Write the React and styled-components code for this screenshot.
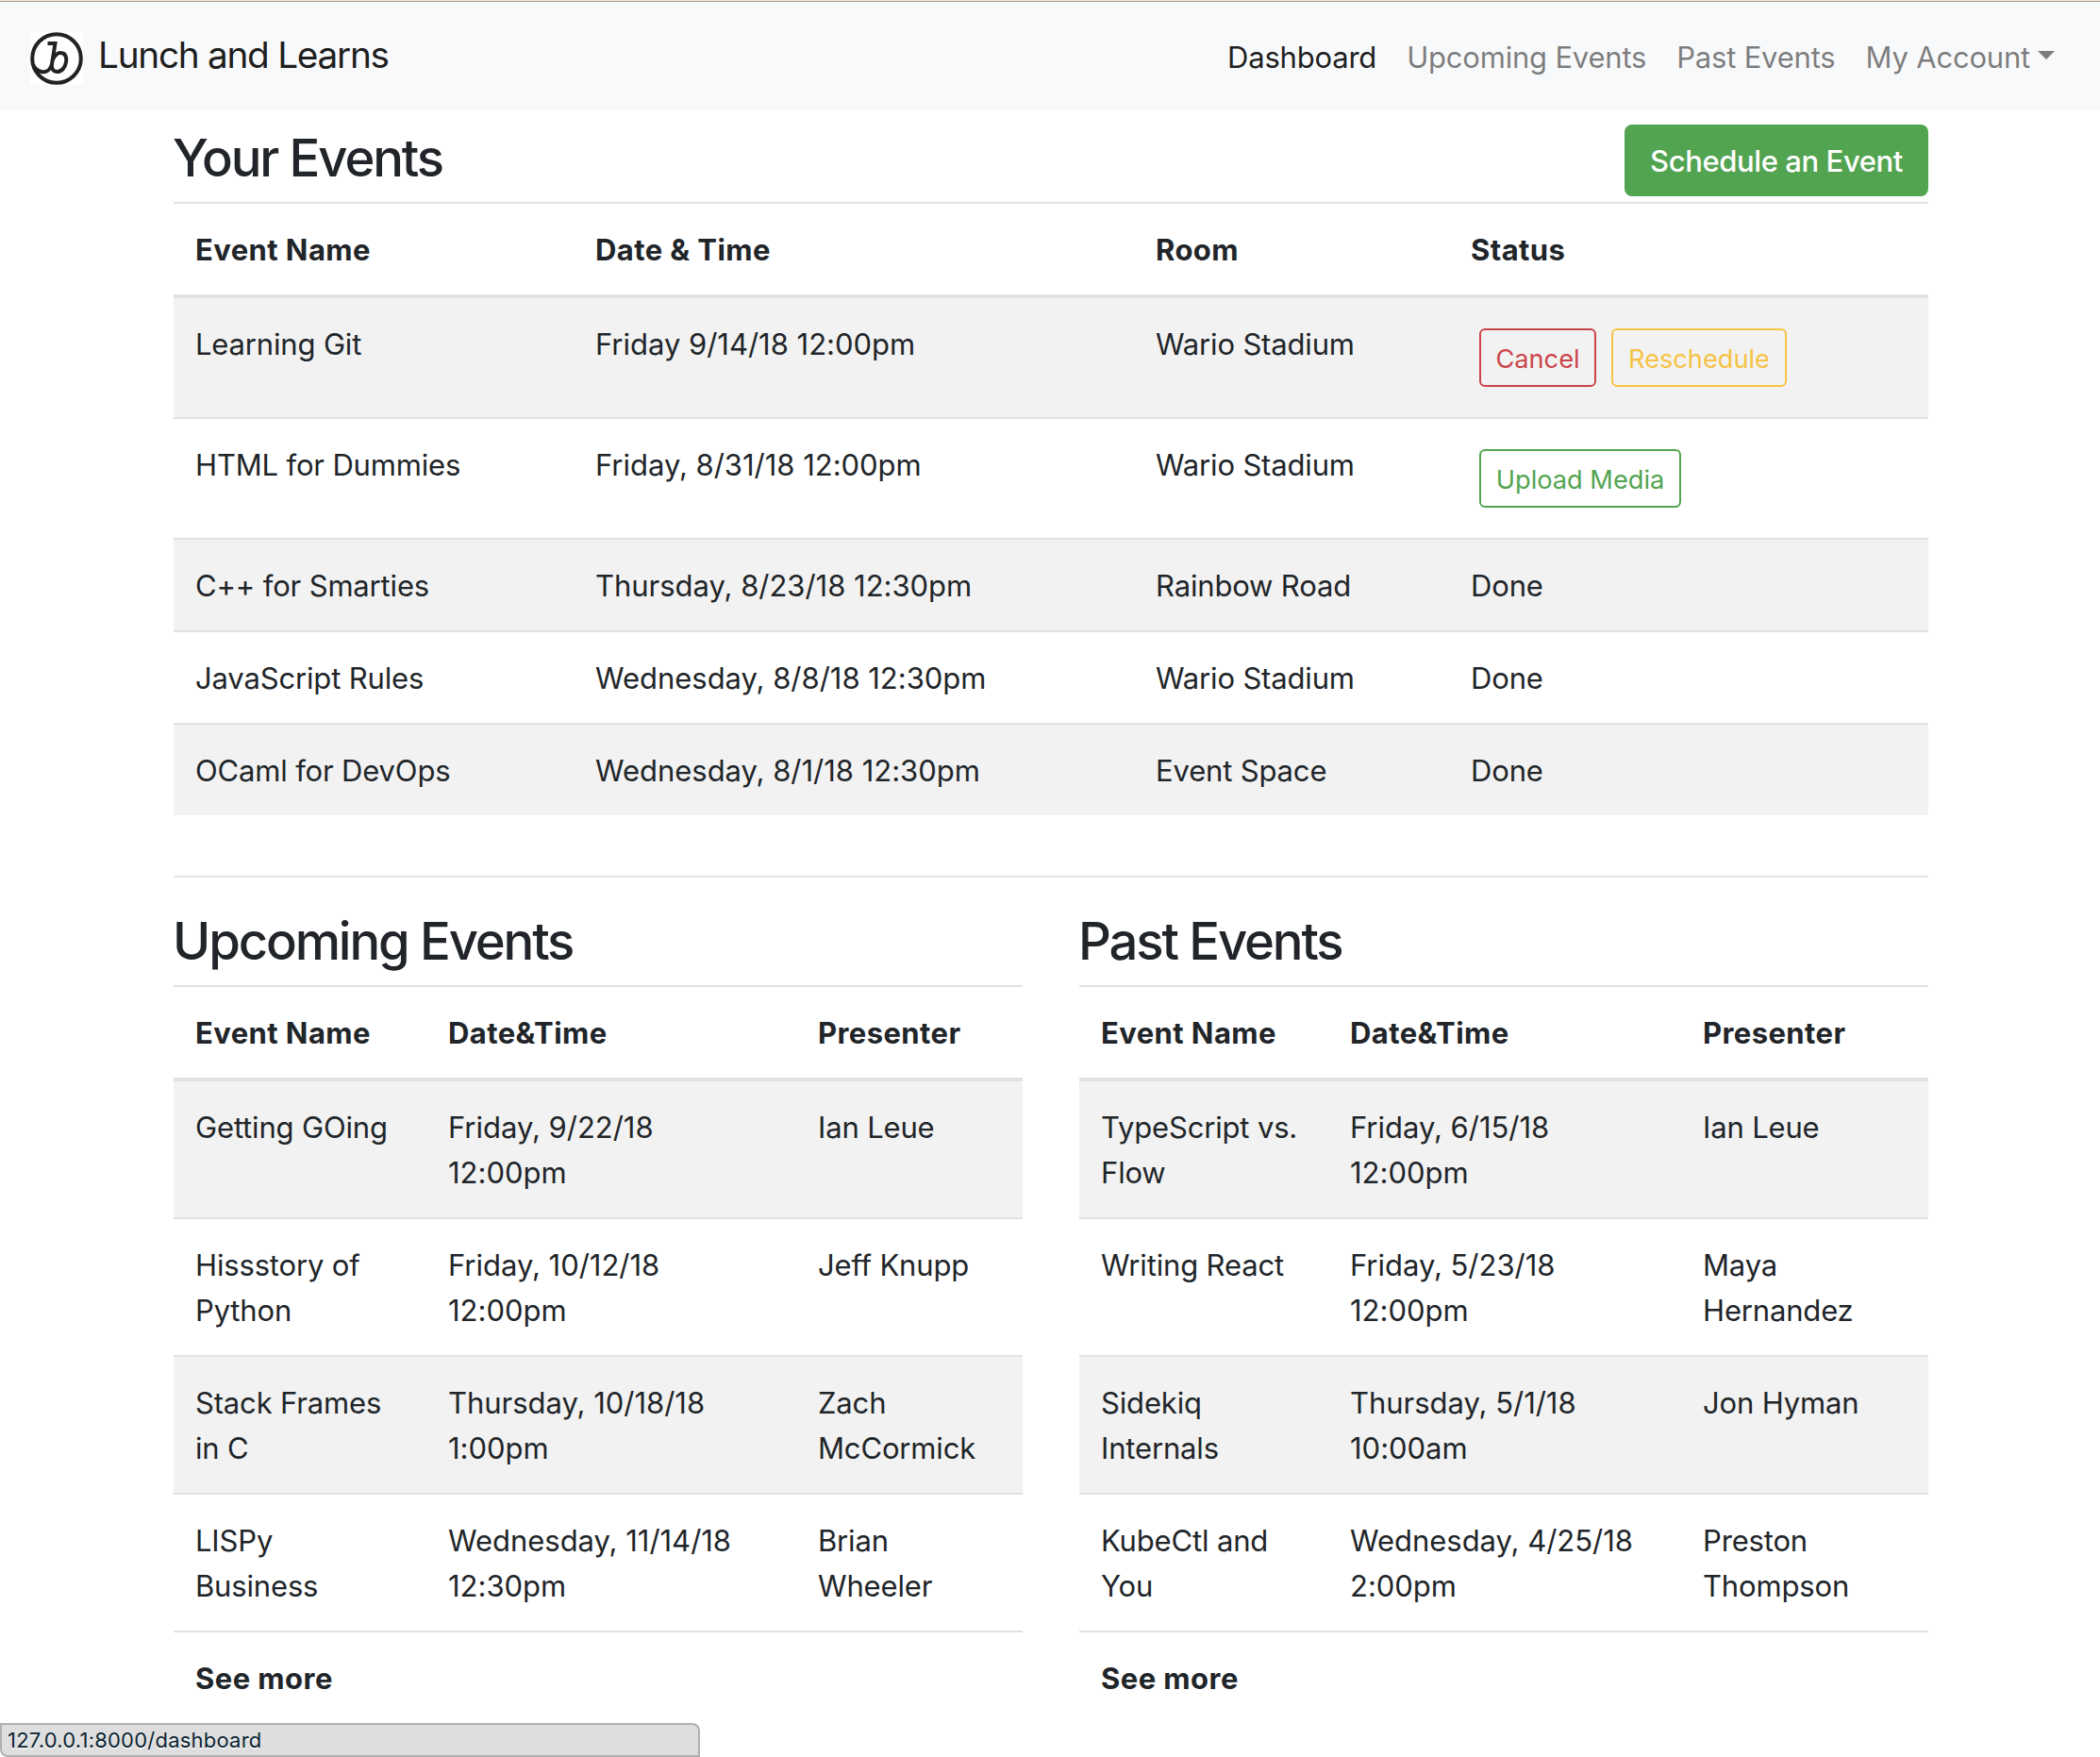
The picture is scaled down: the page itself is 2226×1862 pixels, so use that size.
import React from 'react';
import styled, { createGlobalStyle } from 'styled-components';

const GlobalStyle = createGlobalStyle`
  *, *::before, *::after { box-sizing: border-box; }
  html, body { margin: 0; background: #fff; }
  body {
    height: 1862px;
    overflow: hidden;
    font-family: Inter, "Liberation Sans", sans-serif;
    font-size: 31px;
    line-height: 48px;
    color: #212529;
  }
`;

const Page = styled.div`
  display: flex;
  flex-direction: column;
  height: 1862px;
  border-top: 1px solid #f3e9dc;
  overflow: hidden;
`;

const Navbar = styled.nav`
  display: flex;
  align-items: center;
  justify-content: space-between;
  flex: none;
  height: 115px;
  padding: 0 48px 0 32px;
  border-top: 1px solid #a89f8c;
  background: #f8f9fa;
`;

const Brand = styled.a`
  display: flex;
  align-items: center;
  gap: 16px;
  padding-top: 5px;
  font-size: 38.8px;
  line-height: 60px;
  letter-spacing: -1.3px;
  color: rgba(0, 0, 0, 0.9);
`;

const BrandName = styled.span`
  padding-bottom: 7px;
`;

const LogoBox = styled.svg`
  display: block;
  width: 56px;
  height: 56px;
  background: #fff;
`;

const NavLinks = styled.div`
  display: flex;
  gap: 32px;
  padding-top: 3px;
`;

const NavLink = styled.a`
  display: flex;
  align-items: center;
  letter-spacing: -0.2px;
  color: ${(p) => (p.$active ? 'rgba(0, 0, 0, 0.9)' : 'rgba(0, 0, 0, 0.5)')};
`;

const Caret = styled.span`
  margin: -5px 0 0 8px;
  border-top: 9.6px solid currentColor;
  border-left: 9.6px solid transparent;
  border-right: 9.6px solid transparent;
`;

const Container = styled.main`
  width: 1860px;
  margin: 0 0 0 184px;
`;

const SectionHead = styled.div`
  display: flex;
  align-items: flex-start;
  justify-content: space-between;
  height: 98px;
  padding-top: 16px;
`;

const Title = styled.h3`
  margin: 0 0 0 -1px;
  padding-top: 1px;
  height: ${(p) => p.$h || 'auto'};
  font-size: 54.4px;
  line-height: 68px;
  font-weight: 500;
  letter-spacing: -2.12px;
`;

const PrimaryButton = styled.button`
  width: 322px;
  height: 76px;
  padding: 1px 0 0;
  border: 0;
  border-radius: 8px;
  background: #53a451;
  color: #fff;
  font: inherit;
  font-weight: 500;
  letter-spacing: -0.4px;
`;

const Table = styled.table`
  width: 100%;
  table-layout: fixed;
  border-collapse: separate;
  border-spacing: 0;

  tbody tr:nth-child(odd) td { background: #f2f2f2; }
  tbody tr:first-child td { border-top: 0; }
  tbody tr td.foot { background: none; }
`;

const Th = styled.th`
  width: ${(p) => p.$w}px;
  padding: 25px 24px 23px;
  border-top: 2px solid #dee2e6;
  border-bottom: 4px solid #dee2e6;
  text-align: left;
  font-weight: 700;
  white-space: nowrap;
  letter-spacing: 0.42px;

  &:first-child { padding-left: 23px; }
`;

const Td = styled.td`
  padding: 25px 24px 23px;
  border-top: 2px solid #dee2e6;
  vertical-align: top;
  letter-spacing: -0.16px;

  &:first-child { padding-left: 23px; }
`;

const DateTd = styled(Td)`
  letter-spacing: -0.02px;
`;

const SeeMore = styled(Td)`
  font-weight: 700;
  letter-spacing: 0.45px;
`;

const Line = styled.div`
  height: 48px;
  white-space: nowrap;
`;

const Actions = styled.div`
  display: flex;
  gap: 16px;
  padding: 7px 9px 9px;
`;

const tones = { danger: '#cb444a', warning: '#f6c344', success: '#53a451' };

const OutlineButton = styled.button`
  width: ${(p) => p.$w}px;
  height: 62px;
  padding: 3px 0 0;
  border: 2px solid ${(p) => tones[p.$tone]};
  border-radius: 6px;
  background: transparent;
  color: ${(p) => tones[p.$tone]};
  font: inherit;
  font-size: 27.2px;
  line-height: 42px;
  letter-spacing: 0;
`;

const Divider = styled.hr`
  height: 2px;
  margin: 64px 0 32px;
  border: 0;
  background: #e5e5e5;
`;

const Columns = styled.div`
  display: grid;
  grid-template-columns: 900px 900px;
  column-gap: 60px;
`;

const StatusBar = styled.div`
  position: fixed;
  left: 0;
  bottom: 0;
  width: 742px;
  height: 36px;
  padding-left: 6px;
  border: 2px solid #b0b0b0;
  border-radius: 0 8px 0 8px;
  background: #dedede;
  color: #0b2433;
  font-size: 22px;
  line-height: 33px;
  letter-spacing: 0.22px;
  text-shadow: 0 2px 0 #f2f2f2;
`;

const Logo = () => (
  <LogoBox viewBox="0 0 56 56" fill="none" stroke="#222" strokeWidth="4">
    <circle cx="28" cy="28" r="25.8" />
    <path d="M18.500 12H26.500L23 34C21.500 40 17 43 12 42C8 41 5 38.500 3.500 35.500" />
    <path d="M24 29C26.500 24 30 21.500 33 22C37.500 22.500 39 27 38 32C37 38 33 42 28.500 42C24 42 22.500 38 23 34" />
  </LogoBox>
);

const yourEvents = [
  ['Learning Git', 'Friday 9/14/18 12:00pm', 'Wario Stadium', [['Cancel', 'danger', 124], ['Reschedule', 'warning', 186]]],
  ['HTML for Dummies', 'Friday, 8/31/18 12:00pm', 'Wario Stadium', [['Upload Media', 'success', 214]]],
  ['C++ for Smarties', 'Thursday, 8/23/18 12:30pm', 'Rainbow Road', 'Done'],
  ['JavaScript Rules', 'Wednesday, 8/8/18 12:30pm', 'Wario Stadium', 'Done'],
  ['OCaml for DevOps', 'Wednesday, 8/1/18 12:30pm', 'Event Space', 'Done'],
];

const upcoming = [
  [['Getting GOing'], ['Friday, 9/22/18', '12:00pm'], ['Ian Leue']],
  [['Hissstory of', 'Python'], ['Friday, 10/12/18', '12:00pm'], ['Jeff Knupp']],
  [['Stack Frames', 'in C'], ['Thursday, 10/18/18', '1:00pm'], ['Zach', 'McCormick']],
  [['LISPy', 'Business'], ['Wednesday, 11/14/18', '12:30pm'], ['Brian', 'Wheeler']],
];

const past = [
  [['TypeScript vs.', 'Flow'], ['Friday, 6/15/18', '12:00pm'], ['Ian Leue']],
  [['Writing React'], ['Friday, 5/23/18', '12:00pm'], ['Maya', 'Hernandez']],
  [['Sidekiq', 'Internals'], ['Thursday, 5/1/18', '10:00am'], ['Jon Hyman']],
  [['KubeCtl and', 'You'], ['Wednesday, 4/25/18', '2:00pm'], ['Preston', 'Thompson']],
];

const Lines = ({ items }) => items.map((item) => <Line key={item}>{item}</Line>);

const EventList = ({ title, rows, widths }) => (
  <section>
    <Title $h="82px">{title}</Title>
    <Table>
      <thead>
        <tr>
          <Th $w={widths[0]}>Event Name</Th>
          <Th $w={widths[1]}>Date&amp;Time</Th>
          <Th $w={widths[2]}>Presenter</Th>
        </tr>
      </thead>
      <tbody>
        {rows.map(([name, date, presenter]) => (
          <tr key={name[0]}>
            <Td><Lines items={name} /></Td>
            <DateTd><Lines items={date} /></DateTd>
            <Td><Lines items={presenter} /></Td>
          </tr>
        ))}
        <tr>
          <SeeMore className="foot" colSpan={3}>See more</SeeMore>
        </tr>
      </tbody>
    </Table>
  </section>
);

export default function App() {
  return (
    <Page>
      <GlobalStyle />
      <Navbar>
        <Brand>
          <Logo />
          <BrandName>Lunch and Learns</BrandName>
        </Brand>
        <NavLinks>
          <NavLink $active>Dashboard</NavLink>
          <NavLink>Upcoming Events</NavLink>
          <NavLink>Past Events</NavLink>
          <NavLink>
            My Account
            <Caret />
          </NavLink>
        </NavLinks>
      </Navbar>
      <Container>
        <SectionHead>
          <Title>Your Events</Title>
          <PrimaryButton>Schedule an Event</PrimaryButton>
        </SectionHead>
        <Table>
          <thead>
            <tr>
              <Th $w={423}>Event Name</Th>
              <Th $w={594}>Date &amp; Time</Th>
              <Th $w={334}>Room</Th>
              <Th $w={509}>Status</Th>
            </tr>
          </thead>
          <tbody>
            {yourEvents.map(([name, date, room, status]) => (
              <tr key={name}>
                <Td>{name}</Td>
                <DateTd>{date}</DateTd>
                <Td>{room}</Td>
                <Td>
                  {typeof status === 'string' ? (
                    status
                  ) : (
                    <Actions>
                      {status.map(([label, tone, w]) => (
                        <OutlineButton key={label} $tone={tone} $w={w}>{label}</OutlineButton>
                      ))}
                    </Actions>
                  )}
                </Td>
              </tr>
            ))}
          </tbody>
        </Table>
        <Divider />
        <Columns>
          <EventList title="Upcoming Events" rows={upcoming} widths={[267, 392, 241]} />
          <EventList title="Past Events" rows={past} widths={[263, 374, 263]} />
        </Columns>
      </Container>
      <StatusBar>127.0.0.1:8000/dashboard</StatusBar>
    </Page>
  );
}
